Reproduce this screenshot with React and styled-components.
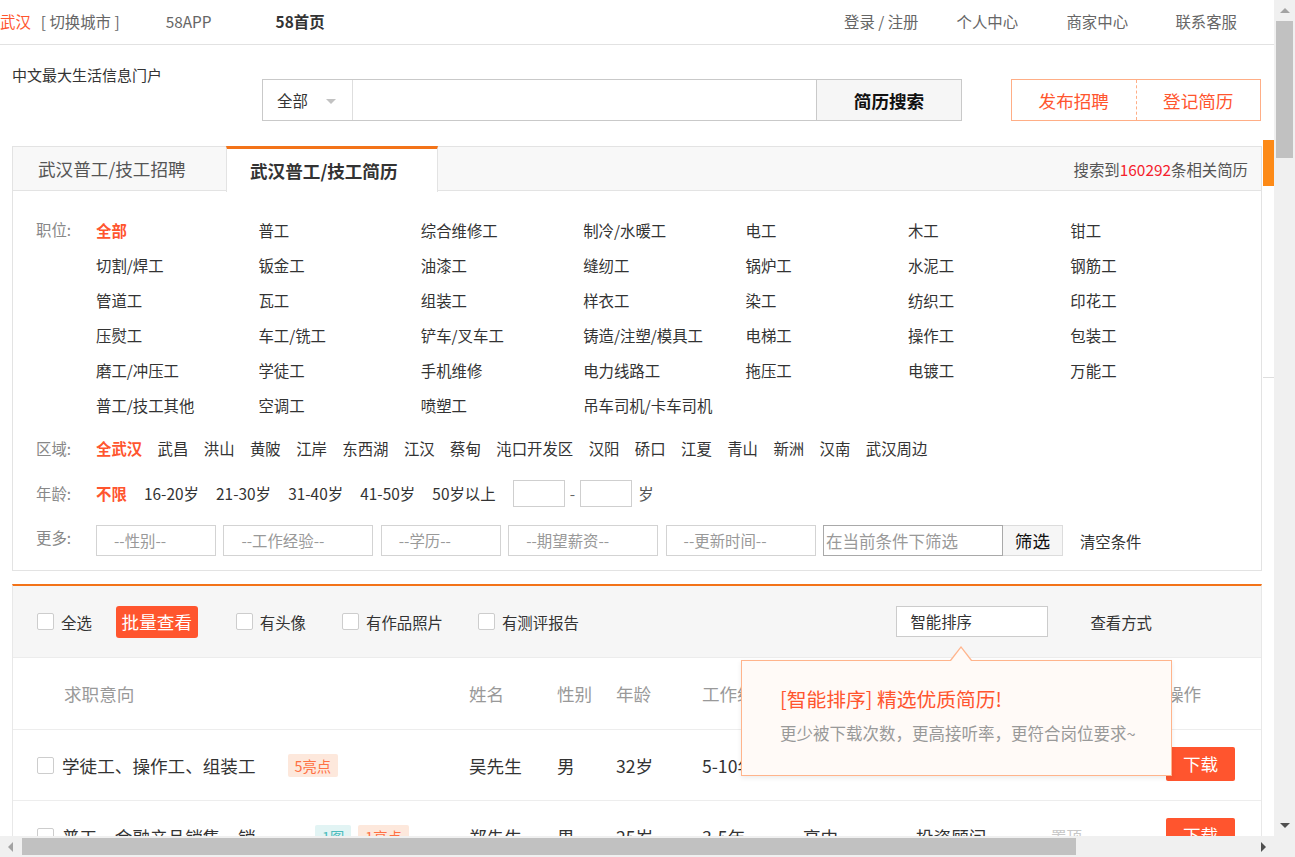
import React from "react";
import styled, { createGlobalStyle } from "styled-components";

const RED = "#ff552e";
const ORANGE = "#f37318";

const GlobalStyle = createGlobalStyle`
  html, body {
    margin: 0;
    padding: 0;
    overflow: hidden;
    background: #fff;
  }
  body {
    font-family: "Noto Sans CJK SC", "Noto Sans", sans-serif;
    font-size: 15.4px;
    color: #333;
  }
  * { box-sizing: border-box; }
  input { font-family: inherit; }
`;

const jobs = [
  ["全部", "普工", "综合维修工", "制冷/水暖工", "电工", "木工", "钳工"],
  ["切割/焊工", "钣金工", "油漆工", "缝纫工", "锅炉工", "水泥工", "钢筋工"],
  ["管道工", "瓦工", "组装工", "样衣工", "染工", "纺织工", "印花工"],
  ["压熨工", "车工/铣工", "铲车/叉车工", "铸造/注塑/模具工", "电梯工", "操作工", "包装工"],
  ["磨工/冲压工", "学徒工", "手机维修", "电力线路工", "拖压工", "电镀工", "万能工"],
  ["普工/技工其他", "空调工", "喷塑工", "吊车司机/卡车司机"],
].flat();

const areas = ["全武汉", "武昌", "洪山", "黄陂", "江岸", "东西湖", "江汉", "蔡甸", "沌口开发区", "汉阳", "硚口", "江夏", "青山", "新洲", "汉南", "武汉周边"];
const ages = ["不限", "16-20岁", "21-30岁", "31-40岁", "41-50岁", "50岁以上"];
const mores = [["--性别--", 120], ["--工作经验--", 150], ["--学历--", 120], ["--期望薪资--", 150], ["--更新时间--", 150]];

const resumes = [
  { title: "学徒工、操作工、组装工", tags: [["5亮点", "hl"]], name: "吴先生", sex: "男", age: "32岁", exp: "5-10年", edu: "初中", job: "操作工", top: "" },
  { title: "普工、金融产品销售、销售代表", tags: [["1图", "pic"], ["1亮点", "hl"]], name: "郑先生", sex: "男", age: "25岁", exp: "3-5年", edu: "高中", job: "投资顾问", top: "置顶" },
  { title: "普工、仓库管理员", tags: [], name: "李先生", sex: "男", age: "28岁", exp: "3-5年", edu: "高中", job: "普工", top: "" },
];

const App = () => {
  return (
    <>
      <GlobalStyle />
      <Page>
        <TopBar>
          <TopGroup>
            <TopLink $red>武汉</TopLink>
            <TopLink $ml={10}>[ 切换城市 ]</TopLink>
            <TopLink $ml={46}>58APP</TopLink>
            <TopLink $ml={64} $bold>58首页</TopLink>
          </TopGroup>
          <TopGroup>
            <TopLink>登录 / 注册</TopLink>
            <TopLink $ml={38}>个人中心</TopLink>
            <TopLink $ml={48.4}>商家中心</TopLink>
            <TopLink $ml={47.4}>联系客服</TopLink>
          </TopGroup>
        </TopBar>

        <Header>
          <Slogan>中文最大生活信息门户</Slogan>
          <SearchBox>
            <SearchSelect>
              全部
              <Caret />
            </SearchSelect>
            <SearchInput />
            <SearchButton>简历搜索</SearchButton>
          </SearchBox>
          <PostBox>
            <PostButton>发布招聘</PostButton>
            <PostButton $dashed>登记简历</PostButton>
          </PostBox>
        </Header>

        <Panel>
          <TabBar>
            <Tab>武汉普工/技工招聘</Tab>
            <Tab $active>武汉普工/技工简历</Tab>
            <ResultCount>
              搜索到<em>160292</em>条相关简历
            </ResultCount>
          </TabBar>

          <FilterBody>
            <FilterRow>
              <FilterLabel>职位:</FilterLabel>
              <JobGrid>
                {jobs.map((j, i) => (
                  <FilterItem key={j} $on={i === 0}>{j}</FilterItem>
                ))}
              </JobGrid>
            </FilterRow>

            <FilterRow $mt={8.5}>
              <FilterLabel>区域:</FilterLabel>
              <InlineList $gap={15.4}>
                {areas.map((a, i) => (
                  <FilterItem key={a} $on={i === 0}>{a}</FilterItem>
                ))}
              </InlineList>
            </FilterRow>

            <FilterRow $mt={10}>
              <FilterLabel>年龄:</FilterLabel>
              <InlineList $gap={17.2}>
                {ages.map((a, i) => (
                  <FilterItem key={a} $on={i === 0}>{a}</FilterItem>
                ))}
                <AgeRange>
                  <AgeInput />
                  <Dash>-</Dash>
                  <AgeInput />
                  <AgeUnit>岁</AgeUnit>
                </AgeRange>
              </InlineList>
            </FilterRow>

            <FilterRow $mt={14.5}>
              <FilterLabel $short>更多:</FilterLabel>
              <MoreRow>
                {mores.map(([t, w]) => (
                  <MoreSelect key={t} $w={w}>{t}</MoreSelect>
                ))}
                <KeywordInput placeholder="在当前条件下筛选" />
                <FilterButton>筛选</FilterButton>
                <ClearLink>清空条件</ClearLink>
              </MoreRow>
            </FilterRow>
          </FilterBody>
        </Panel>

        <ListBox>
          <Toolbar>
            <CheckItem $mr={24}>
              <CheckBox />
              全选
            </CheckItem>
            <BatchButton>批量查看</BatchButton>
            <CheckItem $mr={36}>
              <CheckBox />
              有头像
            </CheckItem>
            <CheckItem $mr={35}>
              <CheckBox />
              有作品照片
            </CheckItem>
            <CheckItem>
              <CheckBox />
              有测评报告
            </CheckItem>
            <SortSelect>智能排序</SortSelect>
            <ViewMode>查看方式</ViewMode>
          </Toolbar>

          <HeadRow>
            <Cell $w={432} $pl={27}>求职意向</Cell>
            <Cell $w={88}>姓名</Cell>
            <Cell $w={59}>性别</Cell>
            <Cell $w={86}>年龄</Cell>
            <Cell $w={101}>工作经验</Cell>
            <Cell $w={113}>学历</Cell>
            <Cell $w={135}>期望职位</Cell>
            <Cell $w={115}>状态</Cell>
            <Cell $w={70}>操作</Cell>
          </HeadRow>

          {resumes.map((r) => (
            <DataRow key={r.name}>
              <Cell $w={432}>
                <CheckBox />
                <Title>{r.title}</Title>
                {r.tags.map(([t, kind], i) => (
                  <Tag key={t} $kind={kind} $first={i === 0}>{t}</Tag>
                ))}
              </Cell>
              <Cell $w={88}>{r.name}</Cell>
              <Cell $w={59}>{r.sex}</Cell>
              <Cell $w={86}>{r.age}</Cell>
              <Cell $w={101}>{r.exp}</Cell>
              <Cell $w={113}>{r.edu}</Cell>
              <Cell $w={135}>{r.job}</Cell>
              <Cell $w={115}><TopMark>{r.top}</TopMark></Cell>
              <Cell $w={70}><DownloadButton>下载</DownloadButton></Cell>
            </DataRow>
          ))}

          <SortTip>
            <TipTitle>[智能排序] 精选优质简历!</TipTitle>
            <TipText>更少被下载次数，更高接听率，更符合岗位要求~</TipText>
          </SortTip>
        </ListBox>
      </Page>

      <SideTab />
      <SideLine />

      <VScroll>
        <ScrollArrow $dir="up" $dim />
        <VThumb />
        <ScrollArrow $dir="down" />
      </VScroll>
      <HScroll>
        <ScrollArrow $dir="left" $dim />
        <HThumb />
        <ScrollArrow $dir="right" />
      </HScroll>
      <ScrollCorner />
    </>
  );
};

const Page = styled.div`
  width: 1274px;
  padding-bottom: 200px;
`;

const TopBar = styled.div`
  height: 45px;
  border-bottom: 1px solid #e2e2e2;
  display: flex;
  align-items: center;
  justify-content: space-between;
  padding: 0 37px 3px 0;
`;

const TopGroup = styled.div`
  display: flex;
  align-items: center;
`;

const TopLink = styled.span`
  margin-left: ${(p) => p.$ml || 0}px;
  color: ${(p) => (p.$red ? RED : p.$bold ? "#333" : "#666")};
  font-weight: ${(p) => (p.$bold ? 700 : 400)};
  white-space: nowrap;
`;

const Header = styled.div`
  height: 101px;
  display: flex;
  align-items: flex-start;
  padding: 20px 0 0 12px;
`;

const Slogan = styled.div`
  width: 250px;
  font-size: 15px;
  line-height: 20px;
  color: #333;
`;

const SearchBox = styled.div`
  width: 700px;
  height: 42px;
  margin-top: 14px;
  border: 1px solid #c9c9c9;
  display: flex;
`;

const SearchSelect = styled.div`
  width: 90px;
  border-right: 1px solid #dedede;
  display: flex;
  align-items: center;
  justify-content: space-between;
  padding: 0 16px 0 14px;
  color: #333;
`;

const Caret = styled.span`
  width: 0;
  height: 0;
  border-left: 5px solid transparent;
  border-right: 5px solid transparent;
  border-top: 5px solid #c2c2c2;
  margin-top: 2px;
`;

const SearchInput = styled.input`
  flex: 1;
  border: none;
  outline: none;
`;

const SearchButton = styled.div`
  width: 145px;
  border-left: 1px solid #c9c9c9;
  background: #f6f6f6;
  display: flex;
  align-items: center;
  justify-content: center;
  font-size: 17.6px;
  font-weight: 700;
  color: #111;
`;

const PostBox = styled.div`
  width: 250px;
  height: 42px;
  margin: 14px 0 0 49px;
  border: 1px solid #ffae86;
  display: flex;
`;

const PostButton = styled.div`
  flex: 1;
  display: flex;
  align-items: center;
  justify-content: center;
  font-size: 17.6px;
  color: ${RED};
  border-left: ${(p) => (p.$dashed ? "1px dashed #ffae86" : "none")};
`;

const Panel = styled.div`
  width: 1250px;
  margin-left: 12px;
  border: 1px solid #e3e3e3;
`;

const TabBar = styled.div`
  height: 44px;
  background: #f8f8f8;
  border-bottom: 1px solid #e3e3e3;
  display: flex;
  align-items: stretch;
`;

const Tab = styled.div`
  width: ${(p) => (p.$active ? "212px" : "213px")};
  display: flex;
  align-items: center;
  font-size: 17.6px;
  white-space: nowrap;
  ${(p) =>
    p.$active
      ? `
    height: 46px;
    margin-top: -1px;
    padding: 0 0 0 23px;
    background: #fff;
    border-top: 3px solid ${ORANGE};
    border-left: 1px solid #e3e3e3;
    border-right: 1px solid #e3e3e3;
    font-weight: 700;
    color: #333;
  `
      : `
    padding-left: 25px;
    color: #555;
  `}
`;

const ResultCount = styled.div`
  margin-left: auto;
  padding-right: 13px;
  display: flex;
  align-items: center;
  color: #555;
  white-space: nowrap;

  & em {
    font-style: normal;
    color: #f5222d;
  }
`;

const FilterBody = styled.div`
  padding: 21px 0 14px 23px;
`;

const FilterRow = styled.div`
  display: flex;
  align-items: flex-start;
  margin-top: ${(p) => p.$mt || 0}px;
`;

const FilterLabel = styled.div`
  width: 60px;
  flex: none;
  line-height: ${(p) => (p.$short ? "24px" : "35px")};
  color: #888;
`;

const JobGrid = styled.div`
  display: grid;
  grid-template-columns: repeat(7, 162.4px);
  grid-auto-rows: 35px;
  align-items: center;
`;

const InlineList = styled.div`
  height: 35px;
  display: flex;
  align-items: center;
  gap: ${(p) => p.$gap}px;
`;

const FilterItem = styled.span`
  white-space: nowrap;
  color: ${(p) => (p.$on ? RED : "#333")};
  font-weight: ${(p) => (p.$on ? 700 : 400)};
`;

const AgeRange = styled.div`
  display: flex;
  align-items: center;
  gap: 5px;
`;

const AgeInput = styled.div`
  width: 52px;
  height: 27px;
  border: 1px solid #cfcfcf;
  background: #fff;
`;

const Dash = styled.span`
  color: #666;
`;

const AgeUnit = styled.span`
  margin-left: 1px;
  color: #555;
`;

const MoreRow = styled.div`
  display: flex;
  align-items: center;
  gap: 7.4px;
`;

const MoreSelect = styled.div`
  width: ${(p) => p.$w}px;
  height: 31px;
  border: 1px solid #d3d3d3;
  padding-left: 17px;
  line-height: 29px;
  color: #999;
  white-space: nowrap;
`;

const KeywordInput = styled.input`
  width: 180px;
  height: 31px;
  border: 1px solid #a9a9a9;
  padding: 0 2px;
  font-size: 16.5px;
  color: #333;
  outline: none;

  &::placeholder {
    color: #999;
  }
`;

const FilterButton = styled.div`
  width: 60px;
  height: 31px;
  margin-left: -7.4px;
  border: 1px solid #dcdcdc;
  border-left: none;
  background: #f6f6f6;
  display: flex;
  align-items: center;
  justify-content: center;
  font-size: 17.6px;
  color: #111;
`;

const ClearLink = styled.span`
  margin-left: 9.6px;
  color: #333;
`;

const ListBox = styled.div`
  position: relative;
  width: 1250px;
  margin: 13px 0 0 12px;
  border-top: 2px solid ${ORANGE};
  border-left: 1px solid #e8e8e8;
  border-right: 1px solid #e8e8e8;
`;

const Toolbar = styled.div`
  height: 72px;
  background: #f6f6f6;
  border-bottom: 1px solid #ececec;
  display: flex;
  align-items: center;
  padding: 0 109px 0 24px;
`;

const CheckItem = styled.label`
  display: flex;
  align-items: center;
  gap: 7px;
  margin-right: ${(p) => p.$mr || 0}px;
  color: #333;
  white-space: nowrap;
`;

const CheckBox = styled.span`
  display: inline-block;
  flex: none;
  width: 17px;
  height: 17px;
  border: 1px solid #cdcdcd;
  border-radius: 2px;
  background: #fff;
`;

const BatchButton = styled.div`
  width: 82px;
  height: 32px;
  margin-right: 38px;
  border-radius: 3px;
  background: ${RED};
  color: #fff;
  font-size: 17.6px;
  display: flex;
  align-items: center;
  justify-content: center;
`;

const SortSelect = styled.div`
  width: 152px;
  height: 31px;
  margin-left: auto;
  border: 1px solid #ccc;
  background: #fff;
  padding-left: 13px;
  line-height: 29px;
  color: #333;
`;

const ViewMode = styled.span`
  margin-left: 42px;
  color: #333;
  white-space: nowrap;
`;

const HeadRow = styled.div`
  height: 72px;
  border-bottom: 1px solid #ededed;
  display: flex;
  align-items: center;
  padding-left: 24px;
  font-size: 17.6px;
  color: #999;
`;

const DataRow = styled(HeadRow)`
  height: 71px;
  color: #333;
`;

const Cell = styled.div`
  width: ${(p) => p.$w}px;
  flex: none;
  display: flex;
  align-items: center;
  padding-left: ${(p) => p.$pl || 0}px;
  white-space: nowrap;
`;

const Title = styled.span`
  max-width: 221px;
  margin-left: 8px;
  overflow: hidden;
  text-overflow: ellipsis;
  white-space: nowrap;
`;

const Tag = styled.span`
  height: 23px;
  line-height: 23px;
  padding: 0 7px;
  margin-left: ${(p) => (p.$first ? 32 : 7)}px;
  border-radius: 2px;
  font-size: 14.3px;
  background: ${(p) => (p.$kind === "pic" ? "#e2f4f4" : "#fde8dc")};
  color: ${(p) => (p.$kind === "pic" ? "#4cbcbc" : "#ff7043")};
`;

const TopMark = styled.span`
  font-size: 15.4px;
  color: #c8c8c8;
`;

const DownloadButton = styled.div`
  width: 69px;
  height: 34px;
  margin-top: -3px;
  border-radius: 2px;
  background: ${RED};
  color: #fff;
  display: flex;
  align-items: center;
  justify-content: center;
  font-size: 17.6px;
`;

const SortTip = styled.div`
  position: absolute;
  top: 74px;
  left: 728px;
  width: 431px;
  height: 116px;
  padding: 25px 0 0 38px;
  background: #fffaf7;
  border: 1px solid #ffb48c;
  box-shadow: 0 2px 5px rgba(0, 0, 0, 0.08);

  &::before,
  &::after {
    content: "";
    position: absolute;
    left: 208px;
    width: 0;
    height: 0;
    border-left: 11px solid transparent;
    border-right: 11px solid transparent;
  }
  &::before {
    top: -15px;
    border-bottom: 14px solid #ffb48c;
  }
  &::after {
    top: -13px;
    left: 209px;
    border-left-width: 10px;
    border-right-width: 10px;
    border-bottom: 13px solid #fffaf7;
  }
`;

const TipTitle = styled.div`
  font-size: 19.8px;
  line-height: 26px;
  color: ${RED};
`;

const TipText = styled.div`
  margin-top: 9px;
  font-size: 16.5px;
  line-height: 24px;
  color: #999;
  white-space: nowrap;
`;

const SideTab = styled.div`
  position: fixed;
  top: 140px;
  left: 1263px;
  width: 11px;
  height: 46px;
  background: #fd8a17;
`;

const SideLine = styled.div`
  position: fixed;
  top: 377px;
  left: 1263px;
  width: 11px;
  height: 1px;
  background: #dedede;
`;

const VScroll = styled.div`
  position: fixed;
  top: 0;
  right: 0;
  width: 21px;
  height: 836px;
  background: #f0f0f0;
  display: flex;
  flex-direction: column;
  align-items: center;
`;

const HScroll = styled.div`
  position: fixed;
  left: 0;
  bottom: 0;
  width: 1274px;
  height: 21px;
  background: #f0f0f0;
  display: flex;
  align-items: center;
`;

const ScrollCorner = styled.div`
  position: fixed;
  right: 0;
  bottom: 0;
  width: 21px;
  height: 21px;
  background: #f0f0f0;
`;

const arrowBorders = {
  up: "border-left: 5px solid transparent; border-right: 5px solid transparent; border-bottom: 5px solid COLOR;",
  down: "border-left: 5px solid transparent; border-right: 5px solid transparent; border-top: 5px solid COLOR;",
  left: "border-top: 5px solid transparent; border-bottom: 5px solid transparent; border-right: 5px solid COLOR;",
  right: "border-top: 5px solid transparent; border-bottom: 5px solid transparent; border-left: 5px solid COLOR;",
};

const ScrollArrow = styled.div`
  flex: none;
  width: 21px;
  height: 21px;
  display: flex;
  align-items: center;
  justify-content: center;

  &::before {
    content: "";
    width: 0;
    height: 0;
    ${(p) => arrowBorders[p.$dir].replace("COLOR", p.$dim ? "#a3a3a3" : "#505050")}
  }
`;

const VThumb = styled.div`
  width: 17px;
  height: 137px;
  background: #c1c1c1;
  margin-bottom: auto;
`;

const HThumb = styled.div`
  width: 1054px;
  height: 17px;
  background: #c1c1c1;
  margin: 0 auto 0 1px;
`;

export default App;
